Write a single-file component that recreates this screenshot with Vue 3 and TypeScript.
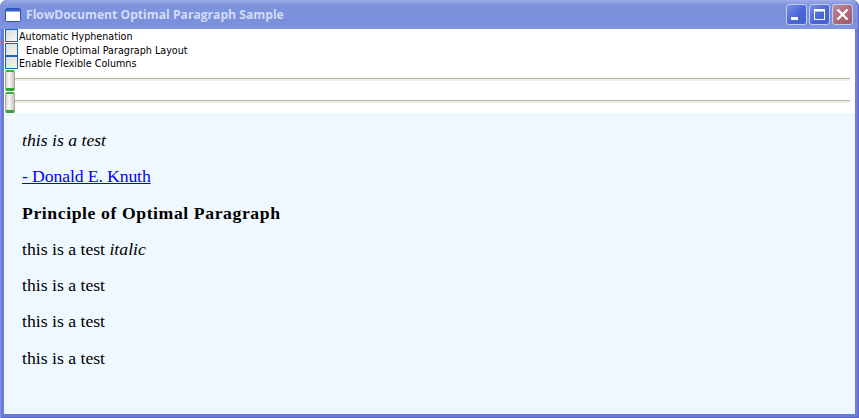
<template>
  <div class="window">
    <header class="titlebar">
      <svg class="app-icon" width="16" height="14" viewBox="0 0 16 14">
        <rect x="0.5" y="0.5" width="15" height="13" rx="1" fill="#fff" stroke="#2f52b8" />
        <rect x="1" y="1" width="14" height="2.5" fill="#2f5fd0" />
      </svg>
      <span class="title">{{ title }}</span>
      <div class="controls">
        <button class="ctl">
          <svg width="21" height="21" viewBox="0 0 21 21"><rect x="5" y="13" width="7" height="3" fill="#fff" /></svg>
        </button>
        <button class="ctl">
          <svg width="21" height="21" viewBox="0 0 21 21"><rect x="5.5" y="5.5" width="10" height="10" fill="none" stroke="#fff" /><rect x="5" y="5" width="11" height="2.5" fill="#fff" /></svg>
        </button>
        <button class="ctl close">
          <svg width="21" height="21" viewBox="0 0 21 21"><path d="M5.5 5.5 L15.5 15.5 M15.5 5.5 L5.5 15.5" stroke="#fff" stroke-width="2.4" /></svg>
        </button>
      </div>
    </header>
    <main class="client">
      <section class="options">
        <label v-for="opt in options" :key="opt.text" class="check">
          <span class="box" />
          <span class="check-text" :class="{ indented: opt.indented }">{{ opt.text }}</span>
        </label>
        <div v-for="n in 2" :key="n" class="slider">
          <span class="thumb" />
          <span class="track" />
        </div>
      </section>
      <article class="doc">
        <p><em>this is a test</em></p>
        <p><a href="#">- Donald E. Knuth</a></p>
        <p><strong>Principle of Optimal Paragraph</strong></p>
        <p>this is a test <em>italic</em></p>
        <p v-for="n in 3" :key="n">this is a test</p>
      </article>
    </main>
  </div>
</template>

<script setup lang="ts">
interface CheckOption {
  text: string
  indented?: boolean
}

const title = 'FlowDocument Optimal Paragraph Sample'

const options: CheckOption[] = [
  { text: 'Automatic Hyphenation' },
  { text: 'Enable Optimal Paragraph Layout', indented: true },
  { text: 'Enable Flexible Columns' },
]
</script>

<style>
html,
body {
  margin: 0;
  overflow: hidden;
}
</style>

<style scoped>
.window {
  width: 859px;
  height: 418px;
  box-sizing: border-box;
  display: flex;
  flex-direction: column;
  background: #6b7bdc;
  border-radius: 7px 7px 0 0;
  padding: 0 4px 4px 4px;
  box-shadow: inset 1px 0 0 #8490e0, inset -1px 0 0 #5a68c8, inset 0 -1px 0 #5a68c8;
}

.titlebar {
  height: 29px;
  flex-shrink: 0;
  display: flex;
  align-items: center;
  margin: 0 -3px;
  padding: 0 3px 0 3px;
  border-radius: 7px 7px 0 0;
  background: linear-gradient(180deg, #9eaeea 0%, #7e93dc 18%, #7a8fdb 70%, #8095e0 100%);
}

.app-icon {
  margin-left: 1px;
  margin-right: 5px;
  flex-shrink: 0;
}

.title {
  font-family: "Open Sans", "DejaVu Sans", sans-serif;
  font-weight: 700;
  font-size: 12.15px;
  color: #d3dcf8;
  white-space: nowrap;
}

.controls {
  margin-left: auto;
  display: flex;
  gap: 2px;
  margin-right: 2px;
}

.ctl {
  width: 21px;
  height: 21px;
  padding: 0;
  border: 1px solid #c3cdf2;
  border-radius: 3px;
  background: linear-gradient(135deg, #7b8fe4 0%, #4a66d8 55%, #4560d0 100%);
  box-sizing: border-box;
  display: flex;
  align-items: center;
  justify-content: center;
  overflow: hidden;
}

.ctl svg {
  flex-shrink: 0;
}

.ctl.close {
  background: linear-gradient(135deg, #c08a98 0%, #ae6675 60%, #a55a6a 100%);
}

.client {
  flex: 1;
  min-height: 0;
  display: flex;
  flex-direction: column;
  background: #f0f8ff;
}

.options {
  background: #fff;
  height: 84px;
  flex-shrink: 0;
  font-family: "DejaVu Sans", sans-serif;
  font-size: 9.6px;
  color: #000;
}

.check {
  display: flex;
  align-items: center;
  height: 13.5px;
  padding-left: 1px;
}

.check-text {
  margin-left: 1px;
  position: relative;
  top: 1px;
  white-space: nowrap;
}

.box {
  width: 11px;
  height: 11px;
  flex-shrink: 0;
  border: 1px solid #1565c8;
  background: linear-gradient(135deg, #dcdcd7 0%, #f5f5f2 100%);
}

.check-text.indented {
  margin-left: 8px;
}

.slider {
  height: 22px;
  display: flex;
  align-items: center;
  padding: 0 5px 0 1px;
}

.thumb {
  width: 8px;
  height: 16px;
  flex-shrink: 0;
  border-radius: 2px;
  border: 1px solid #a8a89c;
  border-top: 2px solid #3cb043;
  border-bottom: 3px solid #2fa53a;
  background: linear-gradient(90deg, #d8d8d0 0%, #f8f8f4 40%, #c8c8c0 100%);
}

.track {
  flex: 1;
  height: 2px;
  margin-top: -3px;
  border-top: 1px solid #b5b5ac;
  background: #f0ede2;
}

.doc {
  flex: 1;
  min-height: 0;
  padding: 18px 18px 0 18px;
  font-family: "Liberation Serif", serif;
  font-size: 17.7px;
  color: #000;
}

.doc p {
  margin: 0 0 16.9px 0;
  height: 19.4px;
  line-height: 19.4px;
  white-space: nowrap;
}

.doc strong {
  letter-spacing: 0.58px;
}

.doc a {
  color: #0000ff;
  letter-spacing: -0.12px;
}
</style>
